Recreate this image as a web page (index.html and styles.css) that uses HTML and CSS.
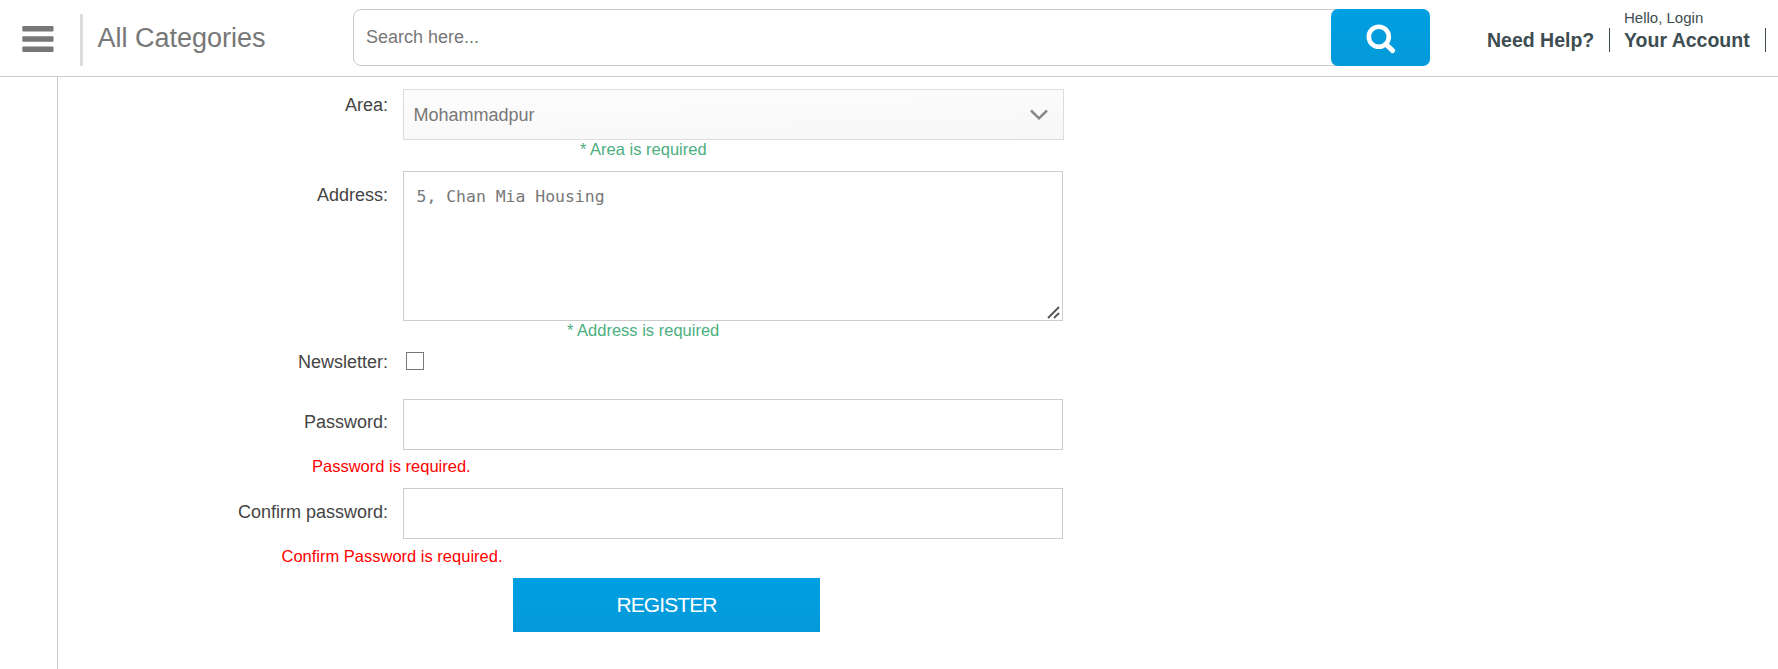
FILE: index.html
```html
<!DOCTYPE html>
<html lang="en">
<head>
<meta charset="utf-8">
<title>Register</title>
<link rel="stylesheet" href="styles.css">
</head>
<body>
<header class="header">
  <svg class="menu-icon" width="32" height="26" viewBox="0 0 32 26" fill="#777"><rect x=".3" width="31.2" height="5.4" rx="1"/><rect x=".3" y="10.3" width="31.2" height="5.4" rx="1"/><rect x=".3" y="20.6" width="31.2" height="5.4" rx="1"/></svg>
  <div class="categories">All Categories</div>
  <form class="search">
    <input class="search-input" type="text" placeholder="Search here...">
    <button class="search-button" type="button" aria-label="Search">
      <svg class="search-icon" width="30" height="30" viewBox="0 0 30 30" fill="none" stroke="#fff"><circle cx="12.8" cy="12.8" r="10" stroke-width="4.6"/><path d="M20 20.2 26.6 26.6" stroke-width="5" stroke-linecap="round"/></svg>
    </button>
  </form>
  <nav class="account-nav">
    <div class="nav-item help">Need Help?</div>
    <div class="nav-line"></div>
    <div class="nav-item account"><span class="hello">Hello, Login</span><span>Your Account</span></div>
    <div class="nav-line"></div>
  </nav>
</header>
<main class="page">
  <form class="form">
    <div class="row area-row">
      <label class="label">Area:</label>
      <div class="select"><span>Mohammadpur</span>
        <svg class="chevron" width="18" height="11" viewBox="0 0 18 11" fill="none" stroke="#888" stroke-width="2.5"><path d="M1 1.5 9 9.3 17 1.5"/></svg>
      </div>
    </div>
    <div class="note area-note">* Area is required</div>
    <div class="row address-row">
      <label class="label">Address:</label>
      <div class="address-box">
        <textarea class="textarea">5, Chan Mia Housing</textarea>
        <svg class="grip" width="13" height="13" viewBox="0 0 13 13" stroke="#555" stroke-width="1.8"><path d="M1 12 12 1M7 12 12 7"/></svg>
      </div>
    </div>
    <div class="note address-note">* Address is required</div>
    <div class="row newsletter-row">
      <label class="label">Newsletter:</label>
      <input class="checkbox" type="checkbox">
    </div>
    <div class="row password-row">
      <label class="label">Password:</label>
      <input class="input" type="password">
    </div>
    <div class="error password-error">Password is required.</div>
    <div class="row confirm-row">
      <label class="label">Confirm password:</label>
      <input class="input" type="password">
    </div>
    <div class="error confirm-error">Confirm Password is required.</div>
    <button class="register" type="button">REGISTER</button>
  </form>
</main>
</body>
</html>
```
FILE: styles.css
```css
* { box-sizing: border-box; }
body {
  margin: 0;
  height: 669px;
  overflow: hidden;
  display: flex;
  flex-direction: column;
  background: #fff;
  color: #444;
  font: 18px/20px "Liberation Sans", Arial, sans-serif;
}
.header {
  display: flex;
  align-items: flex-start;
  height: 77px;
  flex: none;
  padding-left: 22px;
  border-bottom: 1px solid #ccc;
}
.menu-icon { margin-top: 26px; flex: none; }
.categories {
  width: 273px;
  height: 52px;
  margin: 14px 0 0 26px;
  padding: 1px 0 0 14.5px;
  border-left: 3px solid #ddd;
  color: #777;
  font-size: 27px;
  line-height: 47px;
}
.search { display: flex; width: 1077px; margin-top: 9px; }
.search-input {
  width: 985px;
  height: 57px;
  padding: 0 12px;
  border: 1px solid #ccc;
  border-radius: 8px 0 0 8px;
  font: 18px "Liberation Sans", Arial, sans-serif;
  color: #777;
  outline: none;
}
.search-input::placeholder { color: #777; opacity: 1; }
.search-button {
  width: 99px;
  height: 57px;
  margin-left: -7px;
  padding: 0;
  border: 0;
  border-radius: 7px;
  background: linear-gradient(#00a0e2, #0499d8);
  flex: none;
}
.search-icon { display: block; margin: 3px auto 0; }
.account-nav { display: flex; margin-left: 57px; color: #3d4d51; }
.nav-item { font-weight: bold; font-size: 19.5px; line-height: 22px; white-space: nowrap; }
.help { width: 122px; padding-top: 29px; }
.account { width: 155px; padding: 8px 0 0 14px; display: flex; flex-direction: column; }
.hello { margin-bottom: 1px; font-weight: normal; font-size: 15px; line-height: 20px; }
.nav-line { width: 1px; height: 24px; margin-top: 28px; background: #3d4d51; }
.page { flex: 1; margin-left: 57px; padding-top: 12px; border-left: 1px solid #ccc; }
.row { display: flex; align-items: flex-start; }
.label { width: 330px; margin-right: 15px; text-align: right; flex: none; }
.select {
  display: flex;
  align-items: center;
  justify-content: space-between;
  width: 661px;
  height: 51px;
  padding: 0 15px 0 9.5px;
  border: 1px solid #ddd;
  background: linear-gradient(178deg, #fdfdfd, #f7f7f7);
  color: #777;
}
.area-row .label { padding-top: 6px; }
.address-row { margin-top: 12px; }
.address-row .label { padding-top: 14px; }
.address-box { display: grid; width: 660px; height: 150px; }
.textarea {
  grid-area: 1 / 1;
  padding: 15px 12.5px;
  border: 1px solid #ccc;
  border-radius: 0;
  color: #777;
  font: 16.45px/20px "DejaVu Sans Mono", monospace;
  resize: none;
  outline: none;
}
.grip { grid-area: 1 / 1; align-self: end; justify-self: end; margin: 0 3px 2px 0; }
.note, .error { font-size: 16.5px; line-height: 20px; }
.note { margin-top: -1px; color: #4caf80; }
.error { color: #f00; }
.area-note { padding-left: 522px; }
.address-note { padding-left: 509px; }
.newsletter-row { margin-top: 12px; height: 47px; }
.checkbox {
  appearance: none;
  width: 18px;
  height: 18px;
  margin: 0 0 0 3px;
  border: 1px solid #777;
}
.password-row .label { padding-top: 13px; }
.confirm-row { margin-top: 12px; }
.confirm-row .label { padding-top: 14px; }
.input { width: 660px; height: 51px; border: 1px solid #ccc; border-radius: 0; outline: none; }
.password-error { margin-top: 6px; padding-left: 254px; }
.confirm-error { margin-top: 7px; padding-left: 223.5px; }
.register {
  display: block;
  width: 307px;
  height: 54px;
  margin: 12px 0 0 455px;
  padding: 0;
  border: 0;
  background: linear-gradient(#00a0e2, #0499d8);
  color: #fff;
  font: 21px "Liberation Sans", Arial, sans-serif;
  letter-spacing: -0.9px;
}
```
